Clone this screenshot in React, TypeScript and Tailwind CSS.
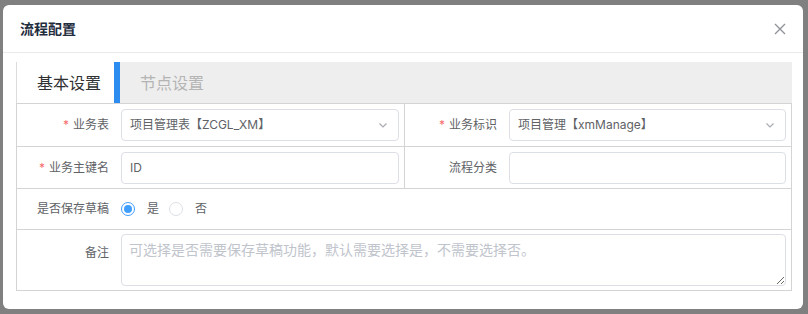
import React, { useState, type ReactNode } from "react";

const font = { fontFamily: '"Inter", "Noto Sans CJK SC", sans-serif' };

const Chevron = () => (
	<svg width="12" height="12" viewBox="0 0 12 12" className="text-[#a8abb2]">
		<path d="M2.5 4.5 6 8l3.5-3.5" fill="none" stroke="currentColor" strokeWidth="1.2" />
	</svg>
);

const Label = ({ text, req }: { text: string; req?: boolean }) => (
	<div className="w-[104px] shrink-0 pr-3 text-right text-[12px] text-[#606266]">
		{req && <span className="mr-1 text-[#f56c6c]">*</span>}
		{text}
	</div>
);

const Field = ({ value, select }: { value?: string; select?: boolean }) => (
	<div className="mr-[5px] flex h-[32px] flex-1 items-center justify-between rounded-[4px] border border-[#dcdfe6] pl-2 pr-[9px] text-[12px] text-[#606266]">
		<span>{value}</span>
		{select && <Chevron />}
	</div>
);

const Radio = ({ on, text, onClick }: { on: boolean; text: string; onClick: () => void }) => (
	<div className="flex cursor-pointer items-center" onClick={onClick}>
		<span
			className={
				on
					? "flex h-[14px] w-[14px] items-center justify-center rounded-full border-[1.5px] border-[#409eff] bg-white"
					: "h-[14px] w-[14px] rounded-full border border-[#dcdfe6] bg-white"
			}>
			{on && <span className="h-[8px] w-[8px] rounded-full bg-[#409eff]" />}
		</span>
		<span className="ml-3 text-[12px] text-[#606266]">{text}</span>
	</div>
);

const App: React.FC = (): ReactNode => {
	const [draft, setDraft] = useState<boolean>(true);
	const [tab, setTab] = useState<number>(0);

	return (
		<div className="h-[314px] w-[808px] overflow-hidden bg-[#808080] pl-[3px] pt-[5px]" style={font}>
			<div className="h-[304px] w-[800px] rounded-[6px] bg-white">
				<div className="flex h-[48px] items-center justify-between border-b border-[#e8eaec] pl-[17px] pr-[16px]">
					<span className="text-[14px] font-bold text-[#1f2d3d]">流程配置</span>
					<svg width="14" height="14" viewBox="0 0 14 14" className="text-[#909399]">
						<path d="M2 2l10 10M12 2 2 12" stroke="currentColor" strokeWidth="1.4" />
					</svg>
				</div>
				<div className="ml-[13px] mt-[9px] w-[776px]">
					<div className="flex h-[41px] bg-[#eeeeee]">
						<div
							onClick={() => setTab(0)}
							className={
								tab === 0
									? "flex w-[98px] items-center border-l border-[#dcdcdc] bg-white pl-5 text-[16px] text-[#303133]"
									: "flex w-[98px] items-center pl-5 text-[16px] text-[#b4b4b4]"
							}>
							基本设置
						</div>
						<div className="w-[6px] bg-[#2d8cf0]" />
						<div
							onClick={() => setTab(1)}
							className={
								tab === 1
									? "flex items-center bg-white px-5 text-[16px] text-[#303133]"
									: "flex items-center px-5 text-[16px] text-[#b4b4b4]"
							}>
							节点设置
						</div>
					</div>
					<div className="border border-[#d4d4d4]">
						<div className="flex h-[43px] border-b border-[#d4d4d4]">
							<div className="flex w-[388px] items-center border-r border-[#d4d4d4]">
								<Label text="业务表" req />
								<Field value="项目管理表【ZCGL_XM】" select />
							</div>
							<div className="flex flex-1 items-center">
								<Label text="业务标识" req />
								<Field value="项目管理【xmManage】" select />
							</div>
						</div>
						<div className="flex h-[42px] border-b border-[#d4d4d4]">
							<div className="flex w-[388px] items-center border-r border-[#d4d4d4]">
								<Label text="业务主键名" req />
								<Field value="ID" />
							</div>
							<div className="flex flex-1 items-center">
								<Label text="流程分类" />
								<Field />
							</div>
						</div>
						<div className="flex h-[41px] items-center border-b border-[#d4d4d4]">
							<Label text="是否保存草稿" />
							<div className="flex items-center gap-[10px]">
								<Radio on={draft} text="是" onClick={() => setDraft(true)} />
								<Radio on={!draft} text="否" onClick={() => setDraft(false)} />
							</div>
						</div>
						<div className="flex h-[60px] pt-[4px]">
							<div className="pt-[10px]">
								<Label text="备注" />
							</div>
							<textarea
								className="mr-[5px] h-[52px] flex-1 resize-y rounded-[4px] border border-[#dcdfe6] px-[7px] py-[4px] text-[14px] text-[#606266] placeholder:text-[#c0c4cc] focus:outline-none"
								placeholder="可选择是否需要保存草稿功能，默认需要选择是，不需要选择否。"
							/>
						</div>
					</div>
				</div>
			</div>
		</div>
	);
};

export default App;
